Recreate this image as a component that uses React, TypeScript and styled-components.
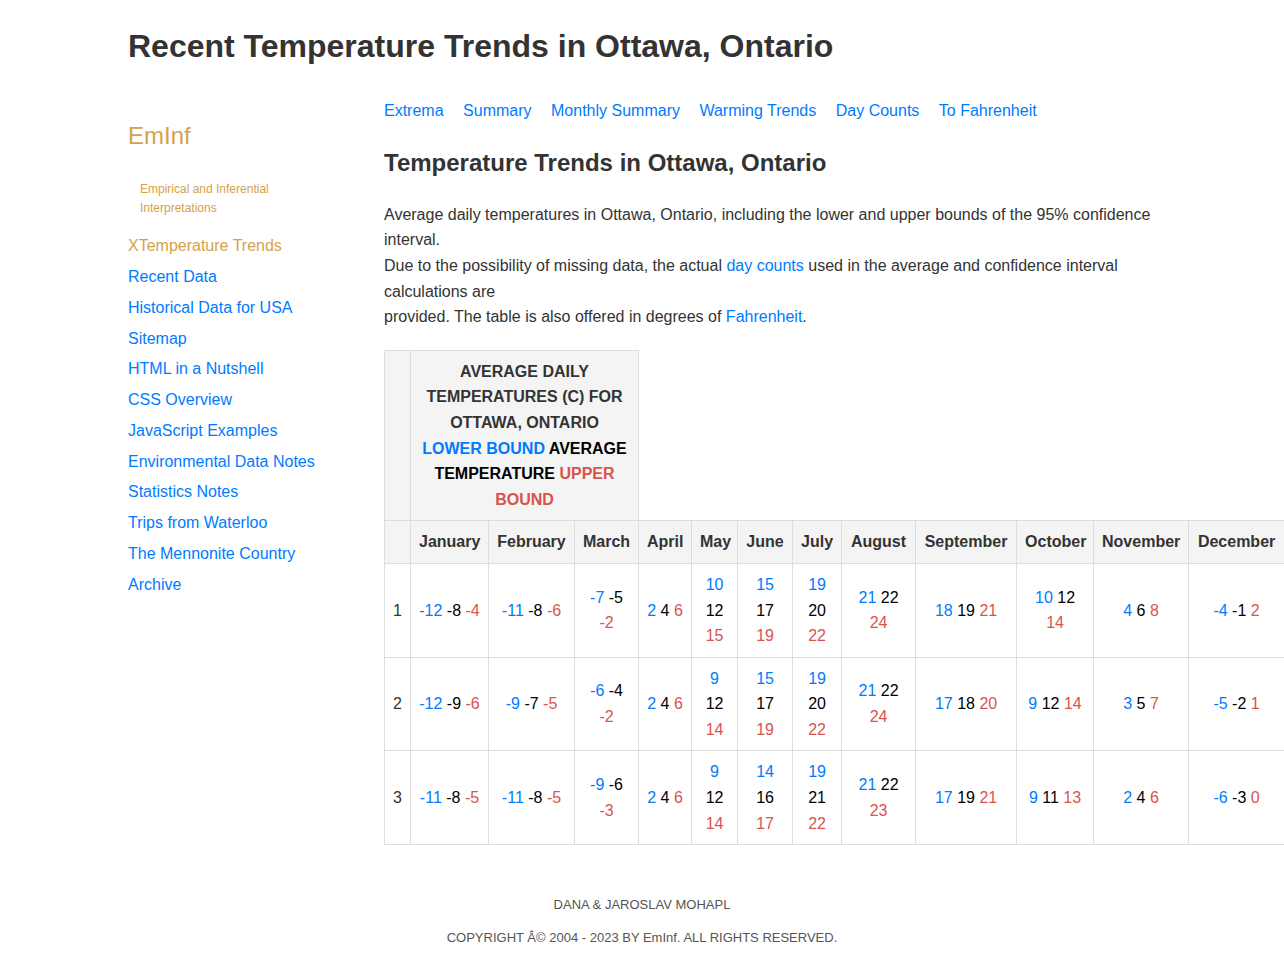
import React from 'react';
import styled, { createGlobalStyle } from 'styled-components';

const GlobalStyle = createGlobalStyle`
  body {
    margin: 0;
    font-family: "Liberation Sans", Arial, Helvetica, sans-serif;
    color: #333;
    background: #fff;
  }
`;

const BLUE = '#007bff';
const RED = '#d9534f';
const GOLD = '#d4a24c';

type Cell = [number, number, number];

const months = [
  'January', 'February', 'March', 'April', 'May', 'June',
  'July', 'August', 'September', 'October', 'November', 'December',
];

const colWidths = [26, 78, 86, 64, 53, 46, 55, 49, 74, 101, 77, 95, 96];

const rows: Cell[][] = [
  [[-12, -8, -4], [-11, -8, -6], [-7, -5, -2], [2, 4, 6], [10, 12, 15], [15, 17, 19], [19, 20, 22], [21, 22, 24], [18, 19, 21], [10, 12, 14], [4, 6, 8], [-4, -1, 2]],
  [[-12, -9, -6], [-9, -7, -5], [-6, -4, -2], [2, 4, 6], [9, 12, 14], [15, 17, 19], [19, 20, 22], [21, 22, 24], [17, 18, 20], [9, 12, 14], [3, 5, 7], [-5, -2, 1]],
  [[-11, -8, -5], [-11, -8, -5], [-9, -6, -3], [2, 4, 6], [9, 12, 14], [14, 16, 17], [19, 21, 22], [21, 22, 23], [17, 19, 21], [9, 11, 13], [2, 4, 6], [-6, -3, 0]],
];

const sideLinks = [
  'Recent Data', 'Historical Data for USA', 'Sitemap', 'HTML in a Nutshell',
  'CSS Overview', 'JavaScript Examples', 'Environmental Data Notes',
  'Statistics Notes', 'Trips from Waterloo', 'The Mennonite Country', 'Archive',
];

const topLinks = ['Extrema', 'Summary', 'Monthly Summary', 'Warming Trends', 'Day Counts', 'To Fahrenheit'];

export default function App() {
  return (
    <>
      <GlobalStyle />
      <Page>
        <Title>Recent Temperature Trends in Ottawa, Ontario</Title>
        <Layout>
          <Sidebar>
            <Brand>EmInf</Brand>
            <Tagline>Empirical and Inferential Interpretations</Tagline>
            <SideNav>
              <SideLink active>XTemperature Trends</SideLink>
              {sideLinks.map((l) => (
                <SideLink key={l}>{l}</SideLink>
              ))}
            </SideNav>
          </Sidebar>
          <Main>
            <TopNav>
              {topLinks.map((l) => (
                <Link key={l}>{l}</Link>
              ))}
            </TopNav>
            <Heading>Temperature Trends in Ottawa, Ontario</Heading>
            <Text>
              Average daily temperatures in Ottawa, Ontario, including the lower and upper bounds of the 95% confidence interval.
              <br />
              Due to the possibility of missing data, the actual <Link>day counts</Link> used in the average and confidence interval calculations are
              <br />
              provided. The table is also offered in degrees of <Link>Fahrenheit</Link>.
            </Text>
            <Table>
              <colgroup>
                {colWidths.map((w, i) => (
                  <col key={i} style={{ width: w }} />
                ))}
              </colgroup>
              <thead>
                <tr>
                  <Th />
                  <Th colSpan={3}>
                    Average daily temperatures (C) for Ottawa, Ontario
                    <br />
                    <Val tone="low">Lower bound</Val> <Val tone="avg">Average temperature</Val>{' '}
                    <Val tone="high">Upper bound</Val>
                  </Th>
                  <Blank colSpan={9} />
                </tr>
                <tr>
                  <Th />
                  {months.map((m) => (
                    <Th key={m} plain>{m}</Th>
                  ))}
                </tr>
              </thead>
              <tbody>
                {rows.map((r, i) => (
                  <tr key={i}>
                    <Td>{i + 1}</Td>
                    {r.map(([lo, avg, hi], j) => (
                      <Td key={j}>
                        <Val tone="low">{lo}</Val> <Val tone="avg">{avg}</Val> <Val tone="high">{hi}</Val>
                      </Td>
                    ))}
                  </tr>
                ))}
              </tbody>
            </Table>
          </Main>
        </Layout>
        <Footer>
          <FooterLine>DANA &amp; JAROSLAV MOHAPL</FooterLine>
          <FooterLine>COPYRIGHT Â© 2004 - 2023 BY EmInf. ALL RIGHTS RESERVED.</FooterLine>
        </Footer>
      </Page>
    </>
  );
}

const Page = styled.div`
  width: 1028px;
  margin: 0 auto;
  padding-top: 27px;
`;

const Title = styled.h1`
  margin: 0;
  font-size: 32px;
  line-height: 1.2;
  font-weight: 700;
  color: #333;
`;

const Layout = styled.div`
  display: grid;
  grid-template-columns: 256px 772px;
  margin-top: 33px;
`;

const Sidebar = styled.aside`
  display: flex;
  flex-direction: column;
  padding-top: 24px;
`;

const Brand = styled.div`
  font-size: 24px;
  line-height: 1.2;
  color: ${GOLD};
`;

const Tagline = styled.div`
  font-size: 12px;
  line-height: 1.6;
  color: ${GOLD};
  padding-left: 12px;
  margin-top: 29px;
  width: 180px;
`;

const SideNav = styled.nav`
  display: flex;
  flex-direction: column;
  margin-top: 12px;
`;

const SideLink = styled.a<{ active?: boolean }>`
  font-size: 16px;
  line-height: 1.6;
  padding: 2.6px 0;
  color: ${(p) => (p.active ? GOLD : BLUE)};
  text-decoration: none;
  cursor: pointer;
`;

const Main = styled.main`
  display: flex;
  flex-direction: column;
`;

const TopNav = styled.nav`
  display: flex;
  gap: 19.5px;
  font-size: 16px;
  line-height: 1.6;
`;

const Link = styled.a`
  color: ${BLUE};
  text-decoration: none;
  cursor: pointer;
`;

const Heading = styled.h2`
  margin: 25px 0 0;
  font-size: 24px;
  line-height: 1.2;
  font-weight: 700;
  color: #333;
`;

const Text = styled.p`
  margin: 24px 0 0;
  font-size: 16px;
  line-height: 1.6;
  color: #333;
`;

const Table = styled.table`
  margin-top: 20px;
  width: 900px;
  table-layout: fixed;
  border-collapse: collapse;
  font-size: 16px;
  line-height: 1.6;
`;

const Th = styled.th<{ plain?: boolean }>`
  background: #f4f4f4;
  border: 1px solid #ddd;
  padding: 8px;
  font-weight: 700;
  color: #333;
  text-align: center;
  text-transform: ${(p) => (p.plain ? 'none' : 'uppercase')};
  vertical-align: middle;
`;

const Blank = styled.td`
  border: none;
  border-bottom: 1px solid #ddd;
  padding: 0;
`;

const Td = styled.td`
  border: 1px solid #ddd;
  padding: 8px;
  text-align: center;
  vertical-align: middle;
  color: #333;
`;

const Val = styled.span<{ tone: 'low' | 'avg' | 'high' }>`
  color: ${(p) => (p.tone === 'low' ? BLUE : p.tone === 'high' ? RED : '#000')};
`;

const Footer = styled.footer`
  display: flex;
  flex-direction: column;
  align-items: center;
  gap: 15px;
  padding: 51px 0 20px;
`;

const FooterLine = styled.div`
  font-size: 13px;
  line-height: 18px;
  color: #555;
`;
